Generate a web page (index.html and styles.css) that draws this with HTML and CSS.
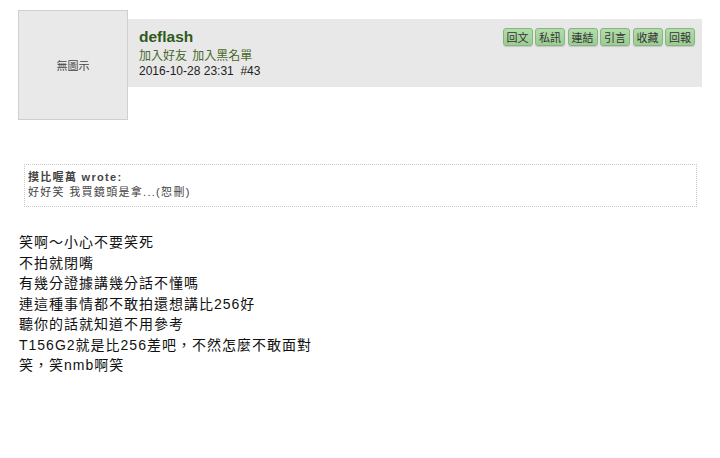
FILE: index.html
```html
<!DOCTYPE html>
<html lang="zh-Hant">
<head>
<meta charset="utf-8">
<link rel="stylesheet" href="styles.css">
</head>
<body>
<div class="post">
  <div class="post-head">
    <div class="avatar">無圖示</div>
    <div class="bar">
      <div class="info">
        <div class="name">deflash</div>
        <div class="links"><a>加入好友</a> <a>加入黑名單</a></div>
        <div class="date">2016-10-28 23:31 &nbsp;#43</div>
      </div>
      <div class="btns">
        <span class="btn">回文</span>
        <span class="btn">私訊</span>
        <span class="btn">連結</span>
        <span class="btn">引言</span>
        <span class="btn">收藏</span>
        <span class="btn">回報</span>
      </div>
    </div>
  </div>
  <div class="quote">
    <div class="quote-who">摸比喔萬 wrote:</div>
    <div class="quote-text">好好笑 我買鏡頭是拿...(恕刪)</div>
  </div>
  <div class="content">
    <div>笑啊～小心不要笑死</div>
    <div>不拍就閉嘴</div>
    <div>有幾分證據講幾分話不懂嗎</div>
    <div>連這種事情都不敢拍還想講比256好</div>
    <div>聽你的話就知道不用參考</div>
    <div>T156G2就是比256差吧，不然怎麼不敢面對</div>
    <div>笑，笑nmb啊笑</div>
  </div>
</div>
</body>
</html>
```
FILE: styles.css
```css
html, body { margin: 0; padding: 0; background: #fff; }
body {
  font-family: "Liberation Sans", "Noto Sans CJK TC", sans-serif;
  color: #222;
}
.post { padding: 10px 18px 0 18px; }
.post-head { display: flex; align-items: flex-start; }
.avatar {
  width: 108px; height: 108px;
  background: #e9e9e9;
  border: 1px solid #cfcfcf;
  display: flex; align-items: center; justify-content: center;
  font-size: 11px; color: #444;
  flex: none;
}
.bar {
  margin-top: 9px;
  width: 574px; height: 68px;
  background: #e8e8e8;
  display: flex; justify-content: space-between;
  box-sizing: border-box;
  padding: 8px 7px 0 11px;
}
.name { font-weight: bold; font-size: 15.5px; color: #2d5a1b; line-height: 20px; }
.links { font-size: 12px; color: #47692a; line-height: 15px; margin-top: 2px; }
.links a { margin-right: 2px; }
.date { font-size: 12px; color: #222; line-height: 14px; }
.btns { display: flex; gap: 2.5px; padding-top: 1px; }
.btn {
  box-sizing: border-box;
  height: 18px; width: 30px;
  display: flex; align-items: center; justify-content: center;
  font-size: 11px; color: #333;
  background: linear-gradient(#b3dcab, #9ccc93);
  border: 1px solid #86b57d;
  border-radius: 3px;
  box-shadow: 0 1px 1px rgba(0,0,0,0.15);
}
.quote {
  margin: 44px 5px 0 6px;
  border: 1px dotted #c8c8c8;
  padding: 5px 4px 6px 3px;
  font-size: 11px;
  color: #444;
  letter-spacing: 1.3px;
  line-height: 15px;
}
.quote-who { font-weight: bold; }
.content {
  margin-top: 25px;
  margin-left: 1px;
  font-size: 14px;
  letter-spacing: 1px;
  line-height: 20.5px;
  color: #111;
}
```
